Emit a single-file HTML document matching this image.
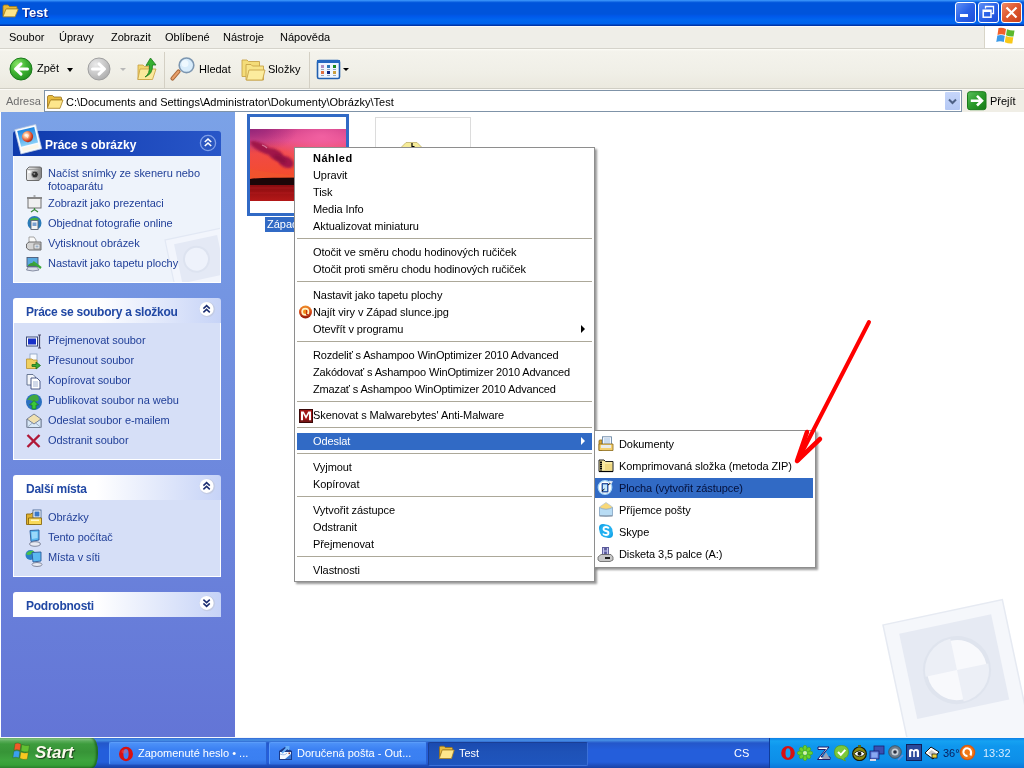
<!DOCTYPE html>
<html><head><meta charset="utf-8">
<style>
*{margin:0;padding:0;box-sizing:border-box}
html,body{width:1024px;height:768px;overflow:hidden;background:#fff}
body{position:relative;font-family:"Liberation Sans",sans-serif;font-size:11px;color:#000}
.a{position:absolute}
.t{position:absolute;white-space:nowrap;line-height:13px;will-change:transform}
#title{left:0;top:0;width:1024px;height:26px;background:linear-gradient(#3b97fa 0,#2f86f4 1px,#0a5fdf 2px,#0054db 3px,#0054db 14px,#0058ea 16px,#0066ef 20px,#0062ec 24px,#0035a8 25px,#0035a8 26px)}
#menubar{left:0;top:26px;width:1024px;height:23px;background:#efeee8;border-top:1px solid #fafafa;border-bottom:1px solid #d5d3cb}
#toolbar{left:0;top:49px;width:1024px;height:40px;background:linear-gradient(#fefef8 0,#f4f3ec 2px,#f0efe7 60%,#ebe9df);border-bottom:1px solid #d0cec4}
#addr{left:0;top:89px;width:1024px;height:23px;background:#f0eee6;border-top:1px solid #fbfaf6}
#pane{left:1px;top:112px;width:234px;height:625px;background:linear-gradient(#7ba2e7,#6375d6)}
#content{left:235px;top:112px;width:789px;height:625px;background:#fff}
#taskbar{left:0;top:738px;width:1024px;height:30px;background:linear-gradient(#3168d5 0,#4993e6 2px,#2457ca 5px,#245edb 40%,#245edb 80%,#1941a5 100%)}
.box{position:absolute;left:13px;width:208px}
.hdr{position:absolute;left:0;top:0;width:208px;height:25px;border-radius:3px 3px 0 0;background:linear-gradient(90deg,#fff 0,#fff 40%,#c6d3f7 100%)}
.hdr .ht{position:absolute;left:13px;top:6px;font-weight:bold;font-size:12px;color:#215dc6;white-space:nowrap}
.body{position:absolute;left:0;top:25px;width:208px;background:#d6dff7;border:1px solid #fff;border-top:0}
.lk{will-change:transform;position:absolute;left:35px;color:#203f98;letter-spacing:-0.05px;white-space:nowrap;line-height:13px}
.menu{position:absolute;background:#fff;border:1px solid #aca899;box-shadow:2px 2px 2px rgba(0,0,0,.35)}
.mi{position:absolute;white-space:nowrap}
.sep{position:absolute;height:1px;background:#aca899}
.mt{letter-spacing:-0.08px}
</style></head><body>

<div id="title" class="a"></div>
<div id="menubar" class="a"></div>
<div id="toolbar" class="a"></div>
<div id="addr" class="a"></div>
<div id="pane" class="a"></div>
<div id="content" class="a"></div>
<div id="taskbar" class="a"></div>
<!-- TITLE -->
<div class="t" style="left:22px;top:5px;font-size:13px;line-height:16px;font-weight:bold;color:#fff;text-shadow:1px 1px 0 #0f1f8a">Test</div>
<!-- MENU -->
<div class="t" style="left:9px;top:31px">Soubor</div>
<div class="t" style="left:59px;top:31px">Úpravy</div>
<div class="t" style="left:111px;top:31px">Zobrazit</div>
<div class="t" style="left:165px;top:31px">Oblíbené</div>
<div class="t" style="left:223px;top:31px">Nástroje</div>
<div class="t" style="left:280px;top:31px">Nápověda</div>
<!-- TOOLBAR -->
<div class="t" style="left:37px;top:62px">Zpět</div>
<div class="t" style="left:199px;top:63px">Hledat</div>
<div class="t" style="left:268px;top:63px">Složky</div>
<!-- ADDRESS -->
<div class="t" style="left:6px;top:95px;color:#6e6e6e">Adresa</div>
<div class="a" style="left:44px;top:90px;width:918px;height:22px;background:#fff;border:1px solid #7f93a8"></div>
<div class="t" style="left:66px;top:96px">C:\Documents and Settings\Administrator\Dokumenty\Obrázky\Test</div>
<div class="t" style="left:990px;top:95px">Přejít</div>

<!-- LEFT PANE -->
<div class="box" style="top:131px">
 <div class="a" style="left:0;top:0;width:208px;height:25px;border-radius:3px 3px 0 0;background:linear-gradient(90deg,#0e3aac 0,#1c48bb 50%,#2856c8 100%)"></div>
 <div class="t" style="left:32px;top:8px;font-size:12px;font-weight:bold;color:#fff;letter-spacing:0px">Práce s obrázky</div>
 <div class="a" style="left:0;top:25px;width:208px;height:127px;background:#eef3fb;border:1px solid #fff;border-top:0"></div>
<!-- box1 watermark -->
<svg class="a" style="left:147px;top:95px" width="60" height="56" viewBox="160 226 60 56"><g transform="rotate(-12 165 240)"><rect x="165" y="240" width="58" height="62" fill="#f2f5fc" stroke="#e2e8f4" stroke-width="1.2"/><rect x="173" y="246" width="44" height="40" fill="#e4e9f5"/><circle cx="191.8" cy="265.3" r="12.5" fill="#eef2fb" stroke="#dde3f0" stroke-width="2"/></g></svg>

 <div class="lk" style="top:36px;line-height:12.6px">Načíst snímky ze skeneru nebo<br>fotoaparátu</div>
 <div class="lk" style="top:66px">Zobrazit jako prezentaci</div>
 <div class="lk" style="top:86px">Objednat fotografie online</div>
 <div class="lk" style="top:106px">Vytisknout obrázek</div>
 <div class="lk" style="top:126px">Nastavit jako tapetu plochy</div>
</div>
<div class="box" style="top:298px">
 <div class="hdr"></div>
 <div class="t" style="left:13px;top:8px;font-size:12px;font-weight:bold;color:#2148a4;letter-spacing:-0.25px">Práce se soubory a složkou</div>
 <div class="a" style="left:0;top:25px;width:208px;height:137px;background:#d6dff7;border:1px solid #fff;border-top:0"></div>
 <div class="lk" style="top:36px">Přejmenovat soubor</div>
 <div class="lk" style="top:56px">Přesunout soubor</div>
 <div class="lk" style="top:76px">Kopírovat soubor</div>
 <div class="lk" style="top:96px">Publikovat soubor na webu</div>
 <div class="lk" style="top:116px">Odeslat soubor e-mailem</div>
 <div class="lk" style="top:136px">Odstranit soubor</div>
</div>
<div class="box" style="top:475px">
 <div class="hdr"></div>
 <div class="t" style="left:13px;top:8px;font-size:12px;font-weight:bold;color:#2148a4;letter-spacing:-0.25px">Další místa</div>
 <div class="a" style="left:0;top:25px;width:208px;height:77px;background:#d6dff7;border:1px solid #fff;border-top:0"></div>
 <div class="lk" style="top:36px">Obrázky</div>
 <div class="lk" style="top:56px">Tento počítač</div>
 <div class="lk" style="top:76px">Místa v síti</div>
</div>
<div class="box" style="top:592px">
 <div class="hdr"></div>
 <div class="t" style="left:13px;top:8px;font-size:12px;font-weight:bold;color:#2148a4;letter-spacing:-0.25px">Podrobnosti</div>
</div>

<!-- thumbnails -->
<div class="a" style="left:247px;top:114px;width:102px;height:102px;border:3px solid #316ac5;background:#fff"></div>
<svg class="a" style="left:250px;top:129px" width="96" height="72" viewBox="0 0 96 72"><defs><linearGradient id="sky" x1="0" y1="0" x2="0" y2="1"><stop offset="0" stop-color="#c0327e"/><stop offset=".22" stop-color="#e04888"/><stop offset=".45" stop-color="#f04a48"/><stop offset="1" stop-color="#f44c2a"/></linearGradient><linearGradient id="sea" x1="0" y1="0" x2="0" y2="1"><stop offset="0" stop-color="#8a0c10"/><stop offset="1" stop-color="#b41818"/></linearGradient><radialGradient id="pk" cx=".75" cy=".15" r=".6"><stop offset="0" stop-color="#f868a8" stop-opacity=".8"/><stop offset="1" stop-color="#f868a8" stop-opacity="0"/></radialGradient><radialGradient id="pu" cx="0" cy="0" r=".5"><stop offset="0" stop-color="#802078" stop-opacity=".7"/><stop offset="1" stop-color="#802078" stop-opacity="0"/></radialGradient><filter id="bl" x="-20%" y="-20%" width="140%" height="140%"><feGaussianBlur stdDeviation="1.2"/></filter></defs><rect width="96" height="50" fill="url(#sky)"/><rect width="96" height="50" fill="url(#pk)"/><rect width="96" height="50" fill="url(#pu)"/><g filter="url(#bl)" fill="#a0164a"><ellipse cx="12" cy="19" rx="13" ry="4" transform="rotate(28 12 19)"/><ellipse cx="26" cy="26" rx="10" ry="5" transform="rotate(32 26 26)"/><ellipse cx="36" cy="33" rx="8" ry="5.5" transform="rotate(25 36 33)"/></g><g filter="url(#bl)" fill="#860f3c" opacity=".7"><ellipse cx="30" cy="30" rx="7" ry="3" transform="rotate(30 30 30)"/></g><path d="M12 16 Q15 17 17 19" stroke="#f4b0c8" stroke-width="1.2" fill="none" opacity=".6"/><path d="M0 40 Q20 44 48 47 Q70 46 96 44 V50 H0 Z" fill="#f05a2c" opacity=".5"/><path d="M0 50 Q10 48.5 30 48.8 Q60 48 96 49 V56 H0 Z" fill="#1c0608"/><rect y="56" width="96" height="16" fill="url(#sea)"/><path d="M0 59 H96 M0 64 H96" stroke="#c02028" stroke-width="1" opacity=".45"/></svg>
<div class="a" style="left:265px;top:217px;width:29px;height:15px;background:#316ac5;overflow:hidden"><div class="t" style="left:2px;top:1px;color:#fff">Západ slunce.jpg</div></div>
<div class="a" style="left:375px;top:117px;width:96px;height:40px;border:1px solid #dcdcdc;border-bottom:0;background:#fff"></div>
<svg class="a" style="left:400px;top:141px" width="24" height="7" viewBox="0 0 24 7"><path d="M1 6.5 L6 1.5 H17 L22 6.5 Z" fill="#f6ec98" stroke="#b8a860" stroke-width=".7"/><path d="M12 2 V5.5 H14.5" stroke="#000" stroke-width="1.2" fill="none"/></svg>
<!-- big watermark -->
<svg class="a" style="left:860px;top:590px" width="164" height="147" viewBox="860 590 164 147"><g transform="rotate(-12 883 625)"><rect x="883" y="625" width="122" height="150" fill="#f5f7fb" stroke="#e6eaf2" stroke-width="1.5"/><rect x="897" y="637" width="94" height="87" fill="#e6eaf3"/><circle cx="946" cy="684.5" r="32" fill="#f8f9fc" stroke="#dfe4ee" stroke-width="4"/><path d="M946 684.5 V652.5 A32 32 0 0 0 914 684.5 Z" fill="#eceff6"/><path d="M946 684.5 V716.5 A32 32 0 0 0 978 684.5 Z" fill="#eceff6"/></g></svg>
<!-- CONTEXT MENU -->
<div class="a" style="left:294px;top:147px;width:301px;height:435px;background:#fff;border:1px solid #8e8e8e;box-shadow:2px 2px 2px rgba(0,0,0,.4)"></div>
<div class="t mt" style="left:313px;top:152px;font-weight:bold;letter-spacing:0.5px">Náhled</div>
<div class="t mt" style="left:313px;top:169px;">Upravit</div>
<div class="t mt" style="left:313px;top:186px;">Tisk</div>
<div class="t mt" style="left:313px;top:203px;">Media Info</div>
<div class="t mt" style="left:313px;top:220px;">Aktualizovat miniaturu</div>
<div class="a" style="left:297px;top:238px;width:295px;height:1px;background:#aca899"></div>
<div class="t mt" style="left:313px;top:246px;">Otočit ve směru chodu hodinových ručiček</div>
<div class="t mt" style="left:313px;top:263px;">Otočit proti směru chodu hodinových ručiček</div>
<div class="a" style="left:297px;top:281px;width:295px;height:1px;background:#aca899"></div>
<div class="t mt" style="left:313px;top:289px;">Nastavit jako tapetu plochy</div>
<div class="t mt" style="left:313px;top:306px;">Najít viry v Západ slunce.jpg</div>
<div class="a ic-avast" style="left:299px;top:305px"></div>
<div class="t mt" style="left:313px;top:323px;">Otevřít v programu</div>
<div class="a" style="left:581px;top:325px;width:0;height:0;border-left:4px solid #000;border-top:4px solid transparent;border-bottom:4px solid transparent"></div>
<div class="a" style="left:297px;top:341px;width:295px;height:1px;background:#aca899"></div>
<div class="t mt" style="left:313px;top:349px;letter-spacing:-0.15px">Rozdeliť s Ashampoo WinOptimizer 2010 Advanced</div>
<div class="t mt" style="left:313px;top:366px;letter-spacing:-0.15px">Zakódovať s Ashampoo WinOptimizer 2010 Advanced</div>
<div class="t mt" style="left:313px;top:383px;letter-spacing:-0.15px">Zmazať s Ashampoo WinOptimizer 2010 Advanced</div>
<div class="a" style="left:297px;top:401px;width:295px;height:1px;background:#aca899"></div>
<div class="t mt" style="left:313px;top:409px;">Skenovat s Malwarebytes' Anti-Malware</div>
<div class="a ic-mbam" style="left:299px;top:409px"></div>
<div class="a" style="left:297px;top:427px;width:295px;height:1px;background:#aca899"></div>
<div class="a" style="left:297px;top:433px;width:295px;height:17px;background:#316ac5"></div>
<div class="t mt" style="left:313px;top:435px;color:#fff;">Odeslat</div>
<div class="a" style="left:581px;top:437px;width:0;height:0;border-left:4px solid #fff;border-top:4px solid transparent;border-bottom:4px solid transparent"></div>
<div class="a" style="left:297px;top:453px;width:295px;height:1px;background:#aca899"></div>
<div class="t mt" style="left:313px;top:461px;">Vyjmout</div>
<div class="t mt" style="left:313px;top:478px;">Kopírovat</div>
<div class="a" style="left:297px;top:496px;width:295px;height:1px;background:#aca899"></div>
<div class="t mt" style="left:313px;top:504px;">Vytvořit zástupce</div>
<div class="t mt" style="left:313px;top:521px;">Odstranit</div>
<div class="t mt" style="left:313px;top:538px;">Přejmenovat</div>
<div class="a" style="left:297px;top:556px;width:295px;height:1px;background:#aca899"></div>
<div class="t mt" style="left:313px;top:564px;">Vlastnosti</div>
<!-- SUBMENU -->
<div class="a" style="left:594px;top:430px;width:222px;height:138px;background:#fff;border:1px solid #8e8e8e;box-shadow:2px 2px 2px rgba(0,0,0,.4)"></div>
<div class="t mt" style="left:619px;top:438px">Dokumenty</div>
<div class="t mt" style="left:619px;top:460px">Komprimovaná složka (metoda ZIP)</div>
<div class="a" style="left:595px;top:478px;width:218px;height:20px;background:#316ac5"></div>
<div class="t mt" style="left:619px;top:482px;color:#04103a">Plocha (vytvořit zástupce)</div>
<div class="t mt" style="left:619px;top:504px">Příjemce pošty</div>
<div class="t mt" style="left:619px;top:526px">Skype</div>
<div class="t mt" style="left:619px;top:548px">Disketa 3,5 palce (A:)</div>
<!-- TASKBAR -->
<div class="a" style="left:0;top:737px;width:1024px;height:1px;background:#f4f7fd"></div>
<div class="a" style="left:0;top:738px;width:98px;height:30px;border-radius:0 6px 6px 0 / 0 14px 14px 0;background:linear-gradient(#5aa85a 0,#7fbf7f 1px,#5aad5a 3px,#3d9c3d 6px,#379437 14px,#3ea43e 22px,#37a037 27px,#2b7f2b 30px)"></div>
<div class="a" style="left:70px;top:738px;width:28px;height:30px;border-radius:0 6px 6px 0 / 0 14px 14px 0;box-shadow:inset -2px 0 2px rgba(0,50,0,.45)"></div>
<div class="t" style="left:35px;top:743px;font-size:17px;line-height:20px;font-weight:bold;font-style:italic;color:#fbfbec;text-shadow:1px 1px 1px #1a3a1a">Start</div>
<div class="a" style="left:109px;top:742px;width:158px;height:23px;border-radius:2px;background:linear-gradient(#4d91f7,#3c81f3 30%,#3a7ff1 80%,#2f6ee0);border:1px solid #5a9cfa;border-right-color:#2a60d0;border-bottom-color:#2a60d0"></div>
<div class="t" style="left:138px;top:747px;color:#fff">Zapomenuté heslo • ...</div>
<div class="a" style="left:269px;top:742px;width:158px;height:23px;border-radius:2px;background:linear-gradient(#4d91f7,#3c81f3 30%,#3a7ff1 80%,#2f6ee0);border:1px solid #5a9cfa;border-right-color:#2a60d0;border-bottom-color:#2a60d0"></div>
<div class="t" style="left:297px;top:747px;color:#fff">Doručená pošta - Out...</div>
<div class="a" style="left:428px;top:742px;width:160px;height:24px;border-radius:2px;background:linear-gradient(#1a4ab0,#1e52b7 40%,#1f55be);border:1px solid #1a3f95;border-right-color:#3b70d8;border-bottom-color:#3b70d8"></div>
<div class="t" style="left:459px;top:747px;color:#fff">Test</div>
<div class="t" style="left:734px;top:747px;color:#fff">CS</div>
<div class="a" style="left:769px;top:738px;width:255px;height:30px;background:linear-gradient(#0c7fe6 0,#15a2f2 3px,#0f97ee 8px,#0d8ee8 24px,#0b76d8 30px);border-left:1px solid #0e3c9a"></div>
<div class="t" style="left:943px;top:747px;color:#0a2060">36°</div>
<div class="t" style="left:983px;top:747px;color:#d8ecff">13:32</div>


<!-- title folder -->
<svg class="a" style="left:2px;top:4px" width="17" height="14" viewBox="0 0 17 14"><path d="M1 2.5 Q1 1 2.5 1 H6 L7.5 2.5 H14 Q15 2.5 15 3.5 V5 H4.5 L1 12 Z" fill="#e8b838" stroke="#a07818" stroke-width=".8"/><path d="M4 5 H16.2 L13 12.8 H1 Z" fill="#fde58a" stroke="#b08a20" stroke-width=".8"/></svg>
<!-- title buttons -->
<div class="a" style="left:955px;top:2px;width:21px;height:21px;border:1px solid #fff;border-radius:3px;background:linear-gradient(135deg,#5f8ff5,#2a62e8 50%,#1f4ed8)"></div>
<div class="a" style="left:960px;top:14px;width:8px;height:3px;background:#fff"></div>
<div class="a" style="left:978px;top:2px;width:21px;height:21px;border:1px solid #fff;border-radius:3px;background:linear-gradient(135deg,#5f8ff5,#2a62e8 50%,#1f4ed8)"></div>
<svg class="a" style="left:978px;top:2px" width="21" height="21" viewBox="0 0 21 21"><path d="M7.5 6.5 V4.5 H15.5 V11.5 H13.5" fill="none" stroke="#fff" stroke-width="1.3"/><rect x="5.2" y="8.2" width="7.8" height="7" fill="none" stroke="#fff" stroke-width="1.5"/><rect x="5" y="8" width="8" height="2" fill="#fff"/></svg>
<div class="a" style="left:1001px;top:2px;width:21px;height:21px;border:1px solid #fff;border-radius:3px;background:linear-gradient(135deg,#f08a68,#e05a30 45%,#c8401c)"></div>
<svg class="a" style="left:1001px;top:2px" width="21" height="21" viewBox="0 0 21 21"><path d="M5.5 5.5 L15.5 15.5 M15.5 5.5 L5.5 15.5" stroke="#fff" stroke-width="2.2"/></svg>
<!-- windows logo box -->
<div class="a" style="left:984px;top:26px;width:40px;height:22px;background:#fff;border-left:1px solid #d8d5c8"></div>
<svg class="a" style="left:994px;top:27px" width="22" height="20" viewBox="0 0 22 20"><path d="M4.5 1 Q8 0 12 2 L11 8 Q7 6.5 3.5 8 Z" fill="#f0602a"/><path d="M13 2.2 Q17 4 20.5 3.5 L19.5 9.5 Q15.5 10 12 8.3 Z" fill="#5cb82c"/><path d="M3.3 8.6 Q7 7.2 10.8 8.8 L9.8 15 Q6 13.5 2.3 15 Z" fill="#3a9ae8"/><path d="M11.8 9 Q15.5 10.6 19.3 10.2 L18.3 16.5 Q14.5 17 10.8 15.2 Z" fill="#f8c818"/></svg>
<!-- toolbar: back -->
<svg class="a" style="left:9px;top:57px" width="24" height="24" viewBox="0 0 24 24"><defs><radialGradient id="gb" cx=".35" cy=".3" r=".8"><stop offset="0" stop-color="#8ee86a"/><stop offset=".5" stop-color="#3fb332"/><stop offset="1" stop-color="#1f8a1f"/></radialGradient></defs><circle cx="12" cy="12" r="11" fill="url(#gb)" stroke="#1c7a1c" stroke-width="1"/><path d="M18.5 12 H7.5 M12 6.8 L6.5 12 L12 17.2" fill="none" stroke="#fff" stroke-width="3" stroke-linejoin="round" stroke-linecap="round"/></svg>
<div class="a" style="left:67px;top:68px;width:0;height:0;border-top:4px solid #000;border-left:3.5px solid transparent;border-right:3.5px solid transparent"></div>
<!-- forward -->
<svg class="a" style="left:87px;top:57px" width="24" height="24" viewBox="0 0 24 24"><defs><radialGradient id="gf" cx=".35" cy=".3" r=".8"><stop offset="0" stop-color="#eaeaea"/><stop offset=".6" stop-color="#c4c4c4"/><stop offset="1" stop-color="#a8a8a8"/></radialGradient></defs><circle cx="12" cy="12" r="11" fill="url(#gf)" stroke="#a0a0a0" stroke-width="1"/><path d="M5.5 12 H16.5 M12 6.8 L17.5 12 L12 17.2" fill="none" stroke="#fff" stroke-width="3" stroke-linejoin="round" stroke-linecap="round"/></svg>
<div class="a" style="left:120px;top:68px;width:0;height:0;border-top:3px solid #b8b8b8;border-left:3px solid transparent;border-right:3px solid transparent"></div>
<!-- up folder -->
<svg class="a" style="left:136px;top:56px" width="22" height="25" viewBox="0 0 22 25"><path d="M2 9 H7 L8.5 10.5 H13 V23.5 H2 Z" fill="#f2d670" stroke="#c8a040" stroke-width=".8"/><path d="M4 13 H20 L16.5 23.5 H1.8 Z" fill="#fbe99a" stroke="#c8a040" stroke-width=".8"/><path d="M9 21 Q14 18 13.5 9 L10 9.5 L14.5 2 L20 9 L16.5 9 Q17 18 9 21 Z" fill="#36b030" stroke="#1d7a1d" stroke-width=".8"/></svg>
<div class="a" style="left:164px;top:52px;width:1px;height:36px;background:#d4d0c4"></div>
<!-- search -->
<svg class="a" style="left:169px;top:56px" width="27" height="26" viewBox="0 0 27 26"><path d="M9.5 15.5 L3.5 22.5" stroke="#a8683a" stroke-width="4.2" stroke-linecap="round"/><path d="M9.5 15.5 L3.5 22.5" stroke="#e8a06a" stroke-width="2" stroke-linecap="round"/><circle cx="17.5" cy="9.3" r="7.3" fill="#d8ecfb" stroke="#7c96b0" stroke-width="1.6"/><circle cx="16" cy="7.5" r="3.5" fill="#f4fbff" opacity=".8"/></svg>
<!-- folders -->
<svg class="a" style="left:240px;top:58px" width="26" height="24" viewBox="0 0 26 24"><path d="M2 2 H7 L8.5 3.5 H19.5 V18.5 H2 Z" fill="#f4dc78" stroke="#c8a448" stroke-width=".9"/><path d="M6 6.5 H11 L12.5 8 H23.5 V22 H6 Z" fill="#f8e488" stroke="#c8a448" stroke-width=".9"/><path d="M9 12 H25 L22.5 22 H6.5 Z" fill="#fcec9e" stroke="#c8a448" stroke-width=".9"/></svg>
<div class="a" style="left:309px;top:52px;width:1px;height:36px;background:#d4d0c4"></div>
<!-- views -->
<svg class="a" style="left:316px;top:59px" width="25" height="21" viewBox="0 0 25 21"><rect x="1.5" y="1.5" width="22" height="18" rx="1.5" fill="#eef6ff" stroke="#2160b0" stroke-width="1.6"/><rect x="1" y="1" width="23" height="3" fill="#2468c0"/><g><rect x="5" y="6" width="3" height="3" fill="#b090c0"/><rect x="11" y="6" width="3" height="3" fill="#2a78b8"/><rect x="17" y="6" width="3" height="3" fill="#1a8a1a"/><rect x="5" y="12" width="3" height="3" fill="#e07040"/><rect x="11" y="12" width="3" height="3" fill="#102880"/><rect x="17" y="12" width="3" height="3" fill="#c8a040"/></g><g fill="#9aa8b8"><rect x="5" y="10" width="3" height="1"/><rect x="11" y="10" width="3" height="1"/><rect x="17" y="10" width="3" height="1"/><rect x="5" y="16" width="3" height="1"/><rect x="11" y="16" width="3" height="1"/><rect x="17" y="16" width="3" height="1"/></g></svg>
<div class="a" style="left:343px;top:68px;width:0;height:0;border-top:3px solid #000;border-left:3px solid transparent;border-right:3px solid transparent"></div>
<!-- address folder -->
<svg class="a" style="left:46px;top:94px" width="18" height="16" viewBox="0 0 18 16"><path d="M1.5 3 Q1.5 1.5 3 1.5 H6.5 L8 3 H14.5 Q15.5 3 15.5 4 V6 H5 L1.5 13.5 Z" fill="#e8bc40" stroke="#987018" stroke-width=".8"/><path d="M4.5 6 H17 L14 14.3 H1.3 Z" fill="#fde68c" stroke="#a88020" stroke-width=".8"/></svg>
<!-- address dropdown -->
<div class="a" style="left:945px;top:92px;width:15px;height:18px;background:linear-gradient(#c6d6fa,#b4c8f4);border-radius:1px"></div>
<svg class="a" style="left:945px;top:92px" width="15" height="18" viewBox="0 0 15 18"><path d="M4 7.5 L7.5 11 L11 7.5" fill="none" stroke="#4d6185" stroke-width="2"/></svg>
<!-- go -->
<svg class="a" style="left:967px;top:91px" width="20" height="20" viewBox="0 0 20 20"><defs><linearGradient id="gg" x1="0" y1="0" x2="1" y2="1"><stop offset="0" stop-color="#5cc05c"/><stop offset=".5" stop-color="#2a9a2a"/><stop offset="1" stop-color="#167a16"/></linearGradient></defs><rect x=".5" y=".7" width="18.5" height="18" rx="2.5" fill="url(#gg)" stroke="#1a7a1a"/><path d="M3.8 9.7 H14.5 M10 4.9 L15 9.7 L10 14.5" fill="none" stroke="#fff" stroke-width="2.6" stroke-linejoin="miter"/></svg>

<!-- BOX1 header icon (tilted photo) -->
<svg class="a" style="left:13px;top:122px" width="32" height="34" viewBox="0 0 32 34"><defs><linearGradient id="pb" x1="0" y1="0" x2="0" y2="1"><stop offset="0" stop-color="#1a84e0"/><stop offset="1" stop-color="#8ad0f8"/></linearGradient><radialGradient id="ball" cx=".4" cy=".35" r=".7"><stop offset="0" stop-color="#fff8e8"/><stop offset=".35" stop-color="#f8b080"/><stop offset=".75" stop-color="#d84020"/><stop offset="1" stop-color="#902010"/></radialGradient></defs><g transform="rotate(-14 16 17)"><rect x="4.5" y="4.5" width="21.5" height="25" fill="#f8fbff" stroke="#b8c8e0" stroke-width=".7"/><rect x="6.5" y="6.5" width="17.5" height="16" fill="url(#pb)"/><circle cx="15.2" cy="14.3" r="5.6" fill="url(#ball)"/><path d="M12 12 Q15 10.5 17 13 L15 16 Z" fill="#fff" opacity=".6"/><path d="M7 24 H23.5 V28 H7 Z" fill="#fbf6e8"/></g></svg>
<!-- collapse btn box1 -->
<svg class="a" style="left:199px;top:134px" width="18" height="18" viewBox="0 0 18 18"><circle cx="9" cy="9" r="7.6" fill="#2a56c0" stroke="#7f9fe8" stroke-width="1.3"/><path d="M5.8 8 L9 5 L12.2 8 M5.8 12 L9 9 L12.2 12" fill="none" stroke="#fff" stroke-width="1.6"/></svg>
<!-- collapse btns box2-4 -->
<svg class="a" style="left:198px;top:300px" width="18" height="18" viewBox="0 0 18 18"><circle cx="9.3" cy="9.5" r="7.8" fill="#c0c8dc" opacity=".7"/><circle cx="8.6" cy="8.9" r="7" fill="#fff"/><path d="M5.4 8.6 L8.6 5.6 L11.8 8.6 M5.4 12.4 L8.6 9.4 L11.8 12.4" fill="none" stroke="#1a2c70" stroke-width="1.5"/></svg>
<svg class="a" style="left:198px;top:477px" width="18" height="18" viewBox="0 0 18 18"><circle cx="9.3" cy="9.5" r="7.8" fill="#c0c8dc" opacity=".7"/><circle cx="8.6" cy="8.9" r="7" fill="#fff"/><path d="M5.4 8.6 L8.6 5.6 L11.8 8.6 M5.4 12.4 L8.6 9.4 L11.8 12.4" fill="none" stroke="#1a2c70" stroke-width="1.5"/></svg>
<svg class="a" style="left:198px;top:594px" width="18" height="18" viewBox="0 0 18 18"><circle cx="9.3" cy="9.5" r="7.8" fill="#c0c8dc" opacity=".7"/><circle cx="8.6" cy="8.9" r="7" fill="#fff"/><path d="M5.4 5.6 L8.6 8.6 L11.8 5.6 M5.4 9.4 L8.6 12.4 L11.8 9.4" fill="none" stroke="#1a2c70" stroke-width="1.5"/></svg>
<!-- camera -->
<svg class="a" style="left:25px;top:165px" width="18" height="17" viewBox="0 0 18 17"><defs><linearGradient id="cam" x1="0" y1="0" x2="1" y2="0"><stop offset="0" stop-color="#f0f0f0"/><stop offset=".5" stop-color="#c8c8c8"/><stop offset="1" stop-color="#808080"/></linearGradient></defs><path d="M1.5 4.5 L4 2 H15.5 L16.5 3 V12.5 L14 15.5 H2 L1.5 14 Z" fill="url(#cam)" stroke="#606060" stroke-width=".9"/><path d="M1.5 4.5 H14 V15.5" fill="none" stroke="#909090" stroke-width=".7"/><circle cx="10" cy="9.5" r="3.4" fill="#303030" stroke="#a0a0a0" stroke-width=".9"/><circle cx="9.3" cy="8.8" r="1" fill="#909090"/><rect x="3" y="6" width="2.5" height="2" fill="#fff"/></svg>
<!-- presentation -->
<svg class="a" style="left:26px;top:195px" width="17" height="18" viewBox="0 0 17 18"><rect x="2" y="3" width="13" height="10" fill="#f0f0f0" stroke="#707070" stroke-width="1"/><rect x="1" y="2" width="15" height="2" fill="#888"/><path d="M8.5 13 V15 M5 17 L8.5 14.5 L12 17" stroke="#3a8a3a" stroke-width="1.3" fill="none"/><path d="M7.5 1 H9.5" stroke="#666"/></svg>
<!-- order online globe -->
<svg class="a" style="left:26px;top:215px" width="17" height="17" viewBox="0 0 17 17"><circle cx="8.5" cy="8" r="7" fill="#2a7ab8"/><path d="M3 5 Q8 1 13 4 Q10 7 6 6 Z" fill="#40b040"/><rect x="5" y="5.5" width="7" height="9" fill="#f4f4f4" stroke="#606878" stroke-width=".9"/><rect x="6.5" y="7.5" width="4" height="3.5" fill="#7aa0d0"/></svg>
<!-- printer -->
<svg class="a" style="left:25px;top:235px" width="18" height="18" viewBox="0 0 18 18"><path d="M4 2 H9 L11 5 V9 H4 Z" fill="#fafafa" stroke="#909090" stroke-width=".8"/><path d="M1.5 9 L4 7 H16 V15 H4 L1.5 13 Z" fill="#d4d4d4" stroke="#606060" stroke-width=".9"/><rect x="9" y="9" width="6" height="5" fill="#f0f0f0" stroke="#707070" stroke-width=".8"/><rect x="10.5" y="10.5" width="3" height="2" fill="#9ab0c8"/></svg>
<!-- wallpaper -->
<svg class="a" style="left:25px;top:256px" width="18" height="17" viewBox="0 0 18 17"><rect x="2" y="1.5" width="11" height="9" fill="#5aa8e0" stroke="#4a5a78" stroke-width=".9"/><path d="M3 9 Q7 5 12 8 V10 H3 Z" fill="#3a9a3a"/><path d="M3 11 H12 L14 14 Q8 16 1.5 14 Z" fill="#d8dce8" stroke="#707890" stroke-width=".8"/><path d="M8 6 L16 12" stroke="#3aa83a" stroke-width="2.2"/></svg>
<!-- rename -->
<svg class="a" style="left:25px;top:334px" width="18" height="16" viewBox="0 0 18 16"><rect x="1.5" y="3" width="11" height="9" fill="#fff" stroke="#3a4a7a" stroke-width="1"/><rect x="3" y="4.5" width="8" height="6" fill="#1830c8"/><path d="M13 1 H16 M14.5 1 V14 M13 14 H16" stroke="#4a4a6a" stroke-width="1.2" fill="none"/></svg>
<!-- move -->
<svg class="a" style="left:25px;top:353px" width="18" height="17" viewBox="0 0 18 17"><rect x="5" y="1" width="7" height="8" fill="#f8fbff" stroke="#8aa0c0" stroke-width=".8"/><path d="M1.5 6 H7 L8 7 H12 V15.5 H1.5 Z" fill="#f0d060" stroke="#b89030" stroke-width=".8"/><path d="M7 11.5 H11 V9 L15.5 12.5 L11 16 V13.5 H7 Z" fill="#38a838" stroke="#1a701a" stroke-width=".8"/></svg>
<!-- copy -->
<svg class="a" style="left:25px;top:373px" width="17" height="17" viewBox="0 0 17 17"><path d="M2 1.5 H8 L10.5 4 V12 H2 Z" fill="#f4f6fa" stroke="#5a6a88" stroke-width=".9"/><path d="M6 5 H12 L15 8 V16 H6 Z" fill="#fff" stroke="#3a4a7a" stroke-width=".9"/><path d="M8 9 H13 M8 11 H13 M8 13 H13" stroke="#8aa0c8" stroke-width=".8"/></svg>
<!-- publish globe -->
<svg class="a" style="left:25px;top:393px" width="18" height="18" viewBox="0 0 18 18"><circle cx="9" cy="9" r="8" fill="#2a70c0"/><path d="M2 7 Q6 1 12 2 Q15 5 13 8 Q8 9 5 7 Z" fill="#40a840"/><path d="M4.5 12 L9 7.5 L13.5 12 H11 V16 H7 V12 Z" fill="#3ac83a" stroke="#1a7a1a" stroke-width=".7"/></svg>
<!-- email -->
<svg class="a" style="left:25px;top:412px" width="18" height="17" viewBox="0 0 18 17"><path d="M2 7 L9 2 L16 7 V15.5 H2 Z" fill="#f0e0b0" stroke="#707a90" stroke-width=".9"/><path d="M2 7 L9 12 L16 7 V15.5 H2 Z" fill="#d8e8f8" stroke="#707a90" stroke-width=".9"/><path d="M2 15.5 L8 10.5 M16 15.5 L10 10.5" stroke="#90a0b8" stroke-width=".8"/></svg>
<!-- delete -->
<svg class="a" style="left:25px;top:433px" width="17" height="16" viewBox="0 0 17 16"><path d="M2.5 2 L14.5 14 M14.5 2 L2.5 14" stroke="#b01838" stroke-width="2.4"/></svg>
<!-- pictures folder -->
<svg class="a" style="left:25px;top:509px" width="18" height="17" viewBox="0 0 18 17"><path d="M1.5 5 H6 L7 4 H10 V15.5 H1.5 Z" fill="#e0b030" stroke="#8a6a10" stroke-width=".9"/><rect x="8" y="1" width="8" height="8" fill="#fff" stroke="#3a5a8a" stroke-width=".8"/><rect x="9.5" y="2.5" width="5" height="5" fill="#3a78c8"/><path d="M3.5 9 H16.5 V15.5 H3.5 Z" fill="#f8d858" stroke="#8a6a10" stroke-width=".9"/><rect x="6" y="10.5" width="8" height="1.5" fill="#fff6c8"/></svg>
<!-- computer -->
<svg class="a" style="left:27px;top:529px" width="15" height="18" viewBox="0 0 15 18"><path d="M3 1.5 L12 1 V11 L4 12.5 Z" fill="#5ab8f0" stroke="#2a5a98" stroke-width=".9"/><path d="M4.5 3 L10.5 2.8 V9 L5 10 Z" fill="#9ad8fa"/><ellipse cx="8" cy="15" rx="5.5" ry="2.3" fill="#e8eaf2" stroke="#6a7088" stroke-width=".8"/></svg>
<!-- network -->
<svg class="a" style="left:25px;top:549px" width="18" height="18" viewBox="0 0 18 18"><circle cx="5.5" cy="6" r="5" fill="#2a80c8"/><path d="M1 5 Q4 1 9 2 Q7 6 3 6 Z" fill="#48c048"/><path d="M7 3.5 L16 3 V12 L8 13 Z" fill="#5ab8f0" stroke="#2a5a98" stroke-width=".9"/><ellipse cx="12" cy="15.5" rx="5" ry="2" fill="#e8eaf2" stroke="#6a7088" stroke-width=".8"/></svg>

<!-- context menu icons -->
<svg class="a" style="left:298px;top:305px" width="15" height="15" viewBox="0 0 15 15"><defs><linearGradient id="av" x1="0" y1="0" x2="0" y2="1"><stop offset="0" stop-color="#f09028"/><stop offset=".5" stop-color="#d84818"/><stop offset="1" stop-color="#901808"/></linearGradient></defs><circle cx="7.5" cy="7" r="6.5" fill="url(#av)"/><circle cx="7.3" cy="6.8" r="4" fill="#fff4c8"/><circle cx="7.3" cy="6.8" r="2.3" fill="#f08818"/><path d="M8.6 5 V9.6 H10.5" stroke="#c03010" stroke-width="1.1" fill="none"/></svg>
<svg class="a" style="left:299px;top:409px" width="14" height="14" viewBox="0 0 14 14"><rect x="0" y="0" width="14" height="14" fill="#3a0808"/><rect x="1" y="1" width="12" height="12" fill="#a01818"/><path d="M2 11.5 H4 V4.5 L7 10 L10 4.5 V11.5 H12 V2.5 H9.3 L7 6.8 L4.7 2.5 H2 Z" fill="#fff"/><path d="M1 12 H13" stroke="#501010" stroke-width="1"/></svg>
<!-- submenu icons -->
<svg class="a" style="left:598px;top:436px" width="16" height="16" viewBox="0 0 16 16"><path d="M1 5 Q1 4 2 4 H4 V14.5 H1 Z" fill="#d8a838" stroke="#8a6818" stroke-width=".8"/><rect x="4.5" y=".8" width="9" height="8" fill="#f4f8ff" stroke="#5a7a9a" stroke-width=".8"/><path d="M6 3 H12 M6 5 H12 M6 7 H12" stroke="#8ab0d8" stroke-width=".8"/><path d="M1 8 H15 V14.5 H1 Z" fill="#f4d070" stroke="#8a6818" stroke-width=".8"/><rect x="3" y="9" width="10" height="3" fill="#e8eef8" opacity=".9"/></svg>
<svg class="a" style="left:598px;top:458px" width="16" height="15" viewBox="0 0 16 15"><path d="M1 2 H6 L7.5 3.5 H15 V13.5 H1 Z" fill="#f8e8a0" stroke="#202020" stroke-width="1"/><path d="M1 13.5 H15" stroke="#000" stroke-width="1.2"/><path d="M3 3 V13 M2 4.5 H4 M2 6.5 H4 M2 8.5 H4 M2 10.5 H4" stroke="#000" stroke-width="1"/><rect x="7" y="6" width="7" height="6" fill="#f0d880"/></svg>
<svg class="a" style="left:597px;top:479px" width="17" height="17" viewBox="0 0 17 17"><circle cx="8" cy="8.5" r="6.8" fill="#fff" stroke="#a8d8f8" stroke-width="1.2"/><path d="M5 4.5 H11 V13 H5 Z" fill="#3a78c8" stroke="#1a3a88" stroke-width=".8"/><path d="M6 5.5 H10 V12 H6 Z" fill="#c8e8fa"/><path d="M7.5 10 L5 12 M11 6 L15 3" stroke="#000" stroke-width="1"/><path d="M12 2 L15.5 2.5 L14 5" fill="#fff" stroke="#e0f0ff" stroke-width=".6"/></svg>
<svg class="a" style="left:598px;top:501px" width="16" height="17" viewBox="0 0 16 17"><path d="M1.5 6 L8 1.5 L14.5 6 V14.5 H1.5 Z" fill="#f8d878" stroke="#b8c8d8" stroke-width=".8"/><path d="M1.5 6.5 Q8 10 14.5 6.5 V14.5 Q8 16 1.5 14.5 Z" fill="#b8dcf4" stroke="#8aa8c8" stroke-width=".8"/><path d="M1.5 15 H14.5" stroke="#7a8898" stroke-width="1"/></svg>
<svg class="a" style="left:598px;top:523px" width="16" height="16" viewBox="0 0 16 16"><circle cx="5" cy="5" r="4" fill="#16a4e8"/><circle cx="11" cy="11" r="4" fill="#16a4e8"/><circle cx="8" cy="8" r="6.5" fill="#22b0f0"/><path d="M10.8 5.5 Q10 4 8 4 Q5.5 4 5.5 6 Q5.5 7.5 8 8 Q10.5 8.5 10.5 10 Q10.5 12 8 12 Q5.5 12 5 10.5" fill="none" stroke="#fff" stroke-width="1.8"/></svg>
<svg class="a" style="left:597px;top:546px" width="17" height="16" viewBox="0 0 17 16"><path d="M5 1 H12 V10 H5 Z" fill="#5a5a9a"/><path d="M6.5 2 V8 M10.5 2 V8 M6.5 5 H10.5" stroke="#c8c8f0" stroke-width="1.2"/><path d="M1 11 L4 8.5 H14 L16 11 V14 L13 15.5 H3 L1 14 Z" fill="#c8c8c8" stroke="#606060" stroke-width=".8"/><rect x="8" y="11" width="5" height="2" fill="#202020"/></svg>
<!-- red arrow -->
<svg class="a" style="left:790px;top:315px" width="90" height="155" viewBox="790 315 90 155"><path d="M869 322 L798 460" stroke="#ff0000" stroke-width="4" stroke-linecap="round"/><path d="M807 432 L797 461 L820 439" fill="none" stroke="#ff0000" stroke-width="4.5" stroke-linecap="round" stroke-linejoin="round"/></svg>
<!-- taskbar icons -->
<svg class="a" style="left:10px;top:742px" width="21" height="20" viewBox="0 0 21 20"><path d="M5 1.5 Q8 0.2 11 2 L10 8.5 Q7 7 4 8.3 Z" fill="#f05a28" stroke="#2a5a1a" stroke-width=".4"/><path d="M11.8 2.4 Q15 4.2 19.5 3.2 L18.5 9.8 Q14.5 10.6 10.9 9 Z" fill="#62c032" stroke="#2a5a1a" stroke-width=".4"/><path d="M3.8 9.2 Q7 7.9 9.9 9.4 L8.9 16 Q6 14.5 2.8 15.8 Z" fill="#3aa0f0" stroke="#2a5a1a" stroke-width=".4"/><path d="M10.8 9.9 Q14.5 11.5 18.3 10.6 L17.3 17.2 Q13.5 18.2 9.8 16.4 Z" fill="#f8c820" stroke="#2a5a1a" stroke-width=".4"/></svg>
<svg class="a" style="left:118px;top:746px" width="16" height="16" viewBox="0 0 16 16"><ellipse cx="8" cy="8" rx="7" ry="7.2" fill="#d81010"/><ellipse cx="8" cy="8" rx="2.6" ry="5" fill="#3c81f3"/><ellipse cx="6.5" cy="5.5" rx="3" ry="2" fill="#ff6060" opacity=".4"/></svg>
<svg class="a" style="left:277px;top:744px" width="17" height="18" viewBox="0 0 17 18"><path d="M2 7 L8 3 L15 7 V16 H2 Z" fill="#1a3a8a"/><path d="M3 8 H14 V15 H3 Z" fill="#f4f8ff"/><path d="M3 10 Q8 12 10 9" stroke="#9ab8e8" stroke-width="1" fill="none"/><path d="M5 9 L11 3 M8.5 3 H11.5 V6" stroke="#6ab0f8" stroke-width="1.8" fill="none"/><path d="M8 15 L14 10 V15 Z" fill="#3a7ad8"/><rect x="11.5" y="8.5" width="1.6" height="1.6" fill="#a04030"/></svg>
<svg class="a" style="left:438px;top:745px" width="17" height="15" viewBox="0 0 17 15"><path d="M1.5 2.5 Q1.5 1.2 2.8 1.2 H6 L7.3 2.5 H13.5 Q14.5 2.5 14.5 3.5 V5 H4.5 L1.5 12 Z" fill="#e8bc40" stroke="#987018" stroke-width=".8"/><path d="M4.2 5 H16.2 L13.5 13.5 H1.3 Z" fill="#fde68c" stroke="#a88020" stroke-width=".8"/></svg>
<!-- tray -->
<svg class="a" style="left:780px;top:745px" width="16" height="16" viewBox="0 0 16 16"><ellipse cx="8" cy="8" rx="6.8" ry="7" fill="#d81010"/><ellipse cx="8" cy="8" rx="2.5" ry="4.8" fill="#16a0f0"/></svg>
<svg class="a" style="left:797px;top:745px" width="16" height="16" viewBox="0 0 16 16"><g fill="#6ad030" stroke="#3a9a18" stroke-width=".5"><ellipse cx="8" cy="3.2" rx="2" ry="3"/><ellipse cx="8" cy="12.8" rx="2" ry="3"/><ellipse cx="3.2" cy="8" rx="3" ry="2"/><ellipse cx="12.8" cy="8" rx="3" ry="2"/><ellipse cx="4.6" cy="4.6" rx="2" ry="2.6" transform="rotate(-45 4.6 4.6)"/><ellipse cx="11.4" cy="11.4" rx="2" ry="2.6" transform="rotate(-45 11.4 11.4)"/><ellipse cx="11.4" cy="4.6" rx="2" ry="2.6" transform="rotate(45 11.4 4.6)"/><ellipse cx="4.6" cy="11.4" rx="2" ry="2.6" transform="rotate(45 4.6 11.4)"/></g><circle cx="8" cy="8" r="2" fill="#d8f8a0"/></svg>
<svg class="a" style="left:816px;top:745px" width="16" height="16" viewBox="0 0 16 16"><path d="M2 2 H13 L5 12 H14 V14.5 H1.5 L9.5 4.5 H2 Z" fill="#fff" stroke="#1a1a6a" stroke-width="1"/><path d="M10 7 L14 14 H6 Z" fill="#9aa0b8"/></svg>
<svg class="a" style="left:833px;top:744px" width="17" height="18" viewBox="0 0 17 18"><path d="M8.5 1.5 Q15.5 1.5 15.5 8 Q15.5 13 11 14.5 L12.5 17 L8 14.8 Q1.5 14.5 1.5 8 Q1.5 1.5 8.5 1.5 Z" fill="#7cc83a" stroke="#58a020" stroke-width=".8"/><path d="M5 8 L7.8 10.8 L12.3 5.8" stroke="#fff" stroke-width="2" fill="none"/></svg>
<svg class="a" style="left:851px;top:744px" width="17" height="17" viewBox="0 0 17 17"><circle cx="8.5" cy="9.8" r="6.8" fill="#8a8a10" stroke="#1a1a08" stroke-width="1.2"/><path d="M2.8 9.8 Q8.5 4 14.2 9.8 Q8.5 15.5 2.8 9.8 Z" fill="#fff" stroke="#101008" stroke-width=".8"/><circle cx="8.5" cy="9.8" r="2" fill="#1a1a08"/><rect x="7" y="1" width="3" height="2.5" fill="#5a6a10"/></svg>
<svg class="a" style="left:869px;top:745px" width="16" height="16" viewBox="0 0 16 16"><rect x="5" y="1" width="10" height="8" fill="#3a50b0" stroke="#1a2070" stroke-width=".8"/><rect x="1" y="6" width="9" height="8" fill="#5a78d8" stroke="#1a2070" stroke-width=".8"/><rect x="2.5" y="7.5" width="6" height="5" fill="#8aa8f0"/><rect x="1" y="14" width="6" height="2" fill="#d8d8e8"/></svg>
<svg class="a" style="left:888px;top:745px" width="17" height="17" viewBox="0 0 17 17"><circle cx="7" cy="7" r="6.3" fill="#6a7a8a" stroke="#3a4a5a" stroke-width=".8"/><circle cx="7" cy="7" r="3.5" fill="#c8d0d8"/><circle cx="7" cy="7" r="1.8" fill="#2a3040"/><path d="M10 15 L15 10" stroke="#6a8ad8" stroke-width="1.5"/></svg>
<svg class="a" style="left:906px;top:744px" width="16" height="17" viewBox="0 0 16 17"><rect x=".5" y=".5" width="15" height="16" fill="#2a4a9a" stroke="#10205a"/><path d="M3 13 V6.5 Q3 5 5 5 Q6.5 5 7.5 6.3 Q8.5 5 10.5 5 Q13 5 13 7.5 V13 H10.8 V8 Q10.8 7 9.8 7 Q8.8 7 8.8 8 V13 H7.2 V8 Q7.2 7 6.2 7 Q5.2 7 5.2 8 V13 Z" fill="#fff"/></svg>
<svg class="a" style="left:924px;top:745px" width="16" height="16" viewBox="0 0 16 16"><path d="M1 8 L7 2 L15 7 L9 14 Z" fill="#fff" stroke="#101010" stroke-width="1"/><path d="M4 8 L7.5 5 L12 8 L8.5 11 Z" fill="#c8c8c8"/><rect x="8" y="9" width="5" height="4" fill="#e8d040" stroke="#101010" stroke-width=".7"/></svg>
<svg class="a" style="left:959px;top:744px" width="17" height="17" viewBox="0 0 17 17"><circle cx="8.5" cy="8.5" r="7.8" fill="#d85a10"/><circle cx="8.5" cy="8.5" r="6.5" fill="#f07818"/><path d="M11.5 11.5 Q13 8 11 5.5 Q9 3.5 6.5 4.5 Q4 6 4.5 9 Q5.5 12 8.5 12" fill="none" stroke="#fff" stroke-width="2"/></svg>

</body></html>
